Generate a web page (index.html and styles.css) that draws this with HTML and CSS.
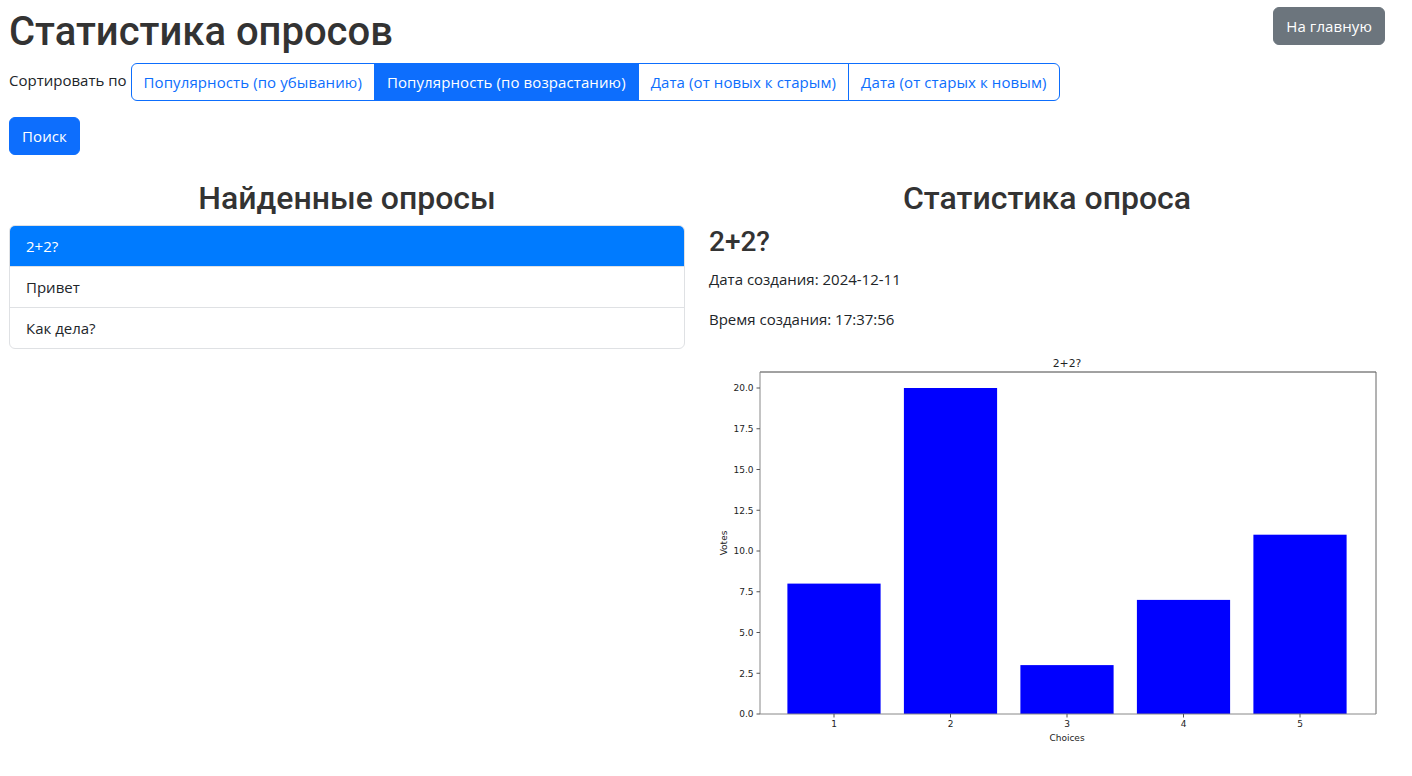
FILE: index.html
```html
<!DOCTYPE html>
<html lang="ru">
<head>
<meta charset="utf-8">
<title>Статистика опросов</title>
<link rel="stylesheet" href="styles.css">
</head>
<body>
<div class="page">
  <header class="header">
    <h1 class="title">Статистика опросов</h1>
    <a class="btn btn-secondary" href="#">На главную</a>
  </header>

  <div class="sort-row">
    <span class="sort-label">Сортировать по</span>
    <div class="btn-group">
      <button class="btn btn-outline">Популярность (по убыванию)</button>
      <button class="btn btn-primary">Популярность (по возрастанию)</button>
      <button class="btn btn-outline">Дата (от новых к старым)</button>
      <button class="btn btn-outline">Дата (от старых к новым)</button>
    </div>
  </div>

  <button class="btn btn-primary search-btn">Поиск</button>

  <div class="columns">
    <section class="col">
      <h2 class="col-title">Найденные опросы</h2>
      <ul class="list-group">
        <li class="list-item active">2+2?</li>
        <li class="list-item">Привет</li>
        <li class="list-item">Как дела?</li>
      </ul>
    </section>
    <section class="col">
      <h2 class="col-title">Статистика опроса</h2>
      <h3 class="poll-title">2+2?</h3>
      <p class="meta">Дата создания: 2024-12-11</p>
      <p class="meta">Время создания: 17:37:56</p>
      <svg class="chart" width="676" height="403" viewBox="0 0 676 403" xmlns="http://www.w3.org/2000/svg">
        <g class="bars" fill="#0000ff">
          <rect x="78.4" y="236.6" width="93.2" height="130.4"/>
          <rect x="194.9" y="41" width="93.2" height="326"/>
          <rect x="311.4" y="318.1" width="93.2" height="48.9"/>
          <rect x="427.9" y="252.9" width="93.2" height="114.1"/>
          <rect x="544.4" y="187.7" width="93.2" height="179.3"/>
        </g>
        <line x1="51" y1="25" x2="667" y2="25" stroke="#444" stroke-width="1"/>
        <line x1="667" y1="25" x2="667" y2="367" stroke="#666" stroke-width="1"/>
        <line x1="51" y1="25" x2="51" y2="367" stroke="#888" stroke-width="1"/>
        <line x1="51" y1="367" x2="667" y2="367" stroke="#888" stroke-width="1"/>
        <g stroke="#555" stroke-width="1">
          <line x1="47.5" y1="367" x2="51" y2="367"/>
          <line x1="47.5" y1="326.25" x2="51" y2="326.25"/>
          <line x1="47.5" y1="285.5" x2="51" y2="285.5"/>
          <line x1="47.5" y1="244.75" x2="51" y2="244.75"/>
          <line x1="47.5" y1="204" x2="51" y2="204"/>
          <line x1="47.5" y1="163.25" x2="51" y2="163.25"/>
          <line x1="47.5" y1="122.5" x2="51" y2="122.5"/>
          <line x1="47.5" y1="81.75" x2="51" y2="81.75"/>
          <line x1="47.5" y1="41" x2="51" y2="41"/>
          <line x1="125" y1="367" x2="125" y2="370.5"/>
          <line x1="241.5" y1="367" x2="241.5" y2="370.5"/>
          <line x1="358" y1="367" x2="358" y2="370.5"/>
          <line x1="474.5" y1="367" x2="474.5" y2="370.5"/>
          <line x1="591" y1="367" x2="591" y2="370.5"/>
        </g>
        <g class="tick" text-anchor="end">
          <text x="44.5" y="370.2">0.0</text>
          <text x="44.5" y="329.5">2.5</text>
          <text x="44.5" y="288.7">5.0</text>
          <text x="44.5" y="248">7.5</text>
          <text x="44.5" y="207.2">10.0</text>
          <text x="44.5" y="166.5">12.5</text>
          <text x="44.5" y="125.7">15.0</text>
          <text x="44.5" y="85">17.5</text>
          <text x="44.5" y="44.2">20.0</text>
        </g>
        <g class="tick" text-anchor="middle">
          <text x="125" y="380">1</text>
          <text x="241.5" y="380">2</text>
          <text x="358" y="380">3</text>
          <text x="474.5" y="380">4</text>
          <text x="591" y="380">5</text>
        </g>
        <text class="axis-label" x="358" y="394" text-anchor="middle">Choices</text>
        <text class="axis-label" x="0" y="0" text-anchor="middle" transform="translate(18 196) rotate(-90)">Votes</text>
        <text class="chart-title" x="358" y="20.3" text-anchor="middle">2+2?</text>
      </svg>
    </section>
  </div>
</div>
</body>
</html>
```

FILE: styles.css
```css
* { box-sizing: border-box; }

html, body {
  margin: 0;
  background: #fff;
}

body {
  font-family: "Open Sans", "Noto Sans", sans-serif;
  font-size: 15px;
  line-height: 24px;
  color: #212529;
}

.page {
  padding: 7px 27px 0 9px;
}

.header {
  display: flex;
  justify-content: space-between;
  align-items: flex-start;
  margin-bottom: 7px;
}

.title {
  margin: 1px 0 0;
  font-family: Roboto, sans-serif;
  font-weight: 500;
  font-size: 40px;
  line-height: 48px;
  color: #333;
}

.btn {
  display: inline-block;
  font-family: inherit;
  font-size: 15px;
  line-height: 24px;
  letter-spacing: 0.1px;
  padding: 6px 12px;
  border: 1px solid transparent;
  border-radius: 6px;
  text-decoration: none;
  cursor: pointer;
  background: transparent;
  white-space: nowrap;
}

.btn-secondary {
  background: #6c757d;
  border-color: #6c757d;
  color: #fff;
}

.btn-primary {
  background: #0d6efd;
  border-color: #0d6efd;
  color: #fff;
}

.btn-outline {
  background: #fff;
  border-color: #0d6efd;
  color: #0d6efd;
}

.sort-row {
  display: flex;
  align-items: flex-start;
}

.sort-label {
  padding-top: 5px;
  margin-right: 4px;
}

.btn-group {
  display: flex;
}

.btn-group .btn {
  border-radius: 0;
}

.btn-group .btn + .btn {
  margin-left: -1px;
}

.btn-group .btn:first-child {
  border-radius: 6px 0 0 6px;
}

.btn-group .btn:last-child {
  border-radius: 0 6px 6px 0;
}

.search-btn {
  display: block;
  margin-top: 16px;
}

.columns {
  display: grid;
  grid-template-columns: 1fr 1fr;
  column-gap: 24px;
  margin-top: 24px;
}

.col {
  min-width: 0;
}

.col-title {
  margin: 0 0 8px;
  text-align: center;
  font-family: Roboto, sans-serif;
  font-weight: 500;
  font-size: 32px;
  line-height: 38.4px;
  color: #333;
}

.list-group {
  list-style: none;
  margin: 0;
  padding: 0;
  border: 1px solid #dfe1e4;
  border-radius: 6px;
  overflow: hidden;
}

.list-item {
  padding: 8px 16px;
  border-top: 1px solid #dfe1e4;
}

.list-item:first-child {
  border-top: 0;
}

.list-item.active {
  background: #007bff;
  color: #fff;
}

.poll-title {
  margin: 0 0 8px;
  font-family: Roboto, sans-serif;
  font-weight: 500;
  font-size: 28px;
  line-height: 33.6px;
  color: #333;
}

.meta {
  margin: 0 0 16px;
}

.chart {
  display: block;
}

.chart text {
  font-family: "DejaVu Sans", sans-serif;
  fill: #222;
}

.chart .tick text {
  font-size: 9px;
}

.chart .axis-label {
  font-size: 9px;
}

.chart .chart-title {
  font-size: 10.8px;
}
```
